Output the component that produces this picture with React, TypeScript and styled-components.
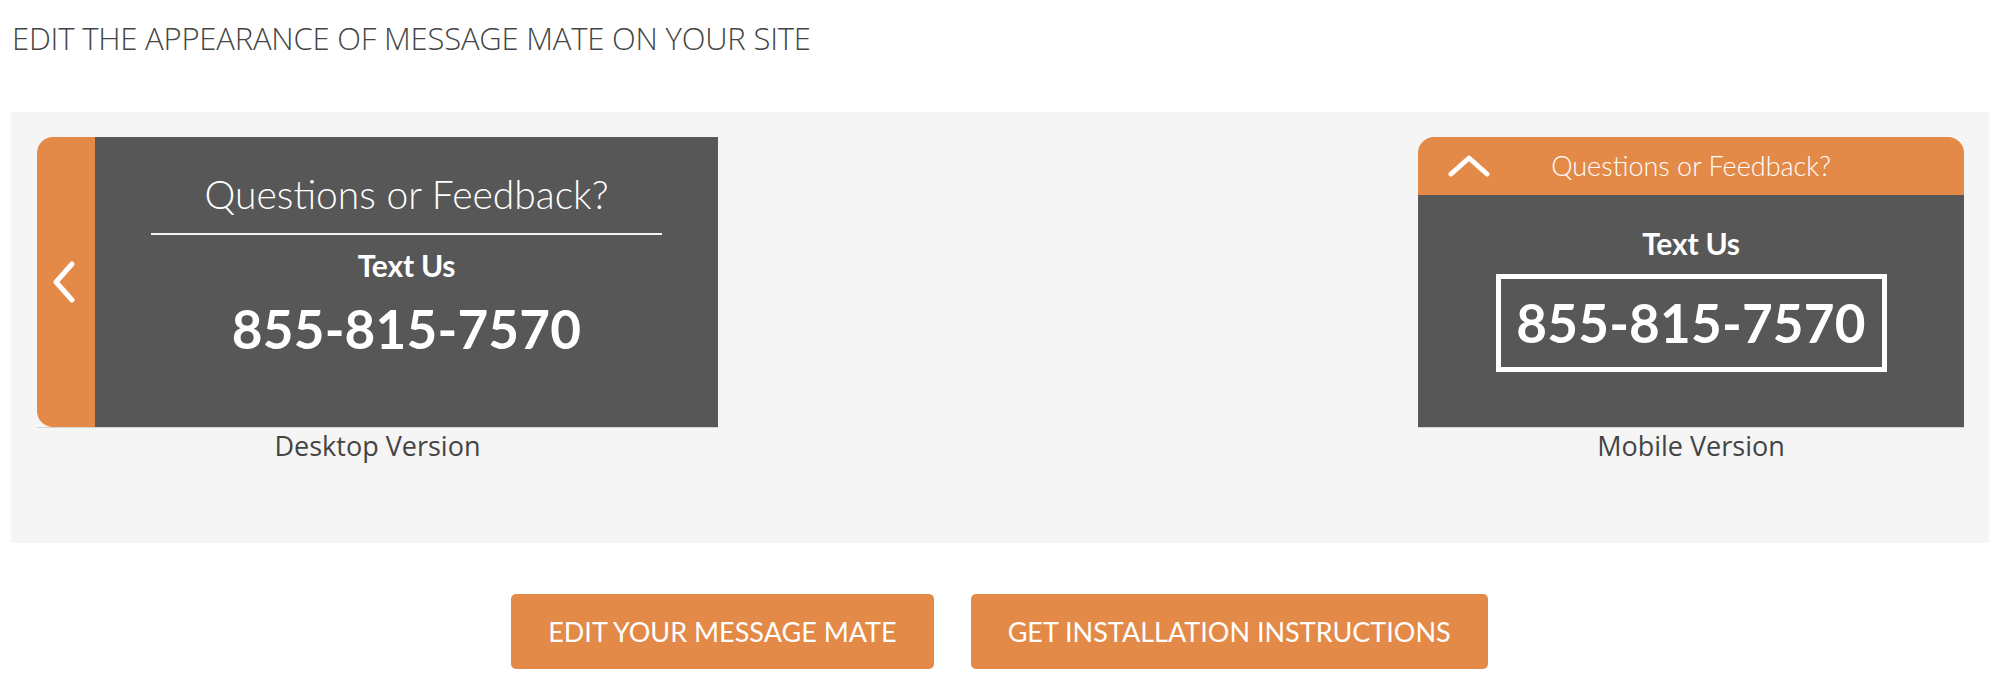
import styled, { createGlobalStyle } from "styled-components";

const GlobalStyle = createGlobalStyle`
  body {
    margin: 0;
    background: #ffffff;
    font-family: "Open Sans", "Liberation Sans", sans-serif;
  }
`;

const ORANGE = "#e48a48";
const DARK = "#575757";

const Page = styled.div`
  padding: 18px 10px 0 11px;
`;

const PageTitle = styled.h1`
  margin: 0 0 54px 1px;
  font-family: "Open Sans", sans-serif;
  font-weight: 300;
  font-size: 31px;
  line-height: 40px;
  color: #454545;
  letter-spacing: -0.2px;
`;

const PreviewPanel = styled.div`
  background: #f5f5f5;
  height: 431px;
  box-sizing: border-box;
  padding: 25px 25px 0 26px;
  display: flex;
  justify-content: space-between;
  align-items: flex-start;
`;

const PreviewColumn = styled.div`
  display: flex;
  flex-direction: column;
  align-items: center;
`;

const PreviewLabel = styled.div`
  margin-top: 2px;
  font-family: "Open Sans", sans-serif;
  font-size: 27px;
  line-height: 34px;
  color: #444444;
`;

const DesktopWidget = styled.div`
  display: flex;
  height: 290px;
  box-shadow: 0 1px 0 #d4d4d4;
`;

const SideTab = styled.div`
  width: 58px;
  background: ${ORANGE};
  border-radius: 16px 0 0 16px;
  display: flex;
  align-items: center;
  justify-content: center;
  padding-right: 4px;
  box-sizing: border-box;
`;

const DesktopBody = styled.div`
  width: 623px;
  background: ${DARK};
  display: flex;
  flex-direction: column;
  align-items: center;
  padding-top: 34px;
  box-sizing: border-box;
`;

const WidgetHeading = styled.div<{ $size: number }>`
  font-family: Lato, "Open Sans", sans-serif;
  font-weight: 300;
  font-size: ${(p) => p.$size}px;
  line-height: ${(p) => Math.round(p.$size * 1.2)}px;
  color: #ffffff;
`;

const Divider = styled.div`
  width: 511px;
  height: 2px;
  background: #f2f2f2;
  margin: 15px 0 14px;
`;

const TextUs = styled.div<{ $gap: number }>`
  font-family: Lato, "Open Sans", sans-serif;
  font-weight: 700;
  font-size: 30px;
  line-height: 32px;
  color: #ffffff;
  letter-spacing: -0.2px;
  margin-bottom: ${(p) => p.$gap}px;
`;

const PhoneNumber = styled.div`
  font-family: Lato, "Open Sans", sans-serif;
  font-weight: 700;
  font-size: 53px;
  line-height: 60px;
  color: #ffffff;
  letter-spacing: 0.2px;
`;

const PhoneBox = styled.div`
  width: 391px;
  height: 98px;
  box-sizing: border-box;
  border: 5px solid #ffffff;
  display: flex;
  align-items: center;
  justify-content: center;
`;

const MobileWidget = styled.div`
  width: 546px;
  height: 290px;
  display: flex;
  flex-direction: column;
  box-shadow: 0 1px 0 #d4d4d4;
`;

const MobileHeader = styled.div`
  height: 58px;
  background: ${ORANGE};
  border-radius: 16px 16px 0 0;
  display: grid;
  grid-template-columns: 1fr auto 1fr;
  align-items: center;
`;

const HeaderIcon = styled.div`
  padding-left: 30px;
  display: flex;
  align-items: center;
`;

const MobileBody = styled.div`
  flex: 1;
  background: ${DARK};
  display: flex;
  flex-direction: column;
  align-items: center;
  padding-top: 32px;
`;

const ButtonRow = styled.div`
  display: flex;
  justify-content: center;
  gap: 37px;
  margin-top: 51px;
  padding-right: 1px;
`;

const ActionButton = styled.button`
  height: 75px;
  padding: 0 37px;
  border: none;
  border-radius: 5px;
  background: ${ORANGE};
  color: #ffffff;
  font-family: Lato, "Open Sans", sans-serif;
  font-weight: 400;
  font-size: 27px;
  cursor: pointer;
`;

const ChevronLeft = () => (
  <svg width="26" height="42" viewBox="0 0 26 42" fill="none">
    <path
      d="M21 3 L5 21 L21 39"
      stroke="#ffffff"
      strokeWidth="5"
      strokeLinecap="round"
      strokeLinejoin="round"
    />
  </svg>
);

const ChevronUp = () => (
  <svg width="42" height="24" viewBox="0 0 42 24" fill="none">
    <path
      d="M3 20 L21 4 L39 20"
      stroke="#ffffff"
      strokeWidth="5"
      strokeLinecap="round"
      strokeLinejoin="round"
    />
  </svg>
);

const App = () => {
  return (
    <>
      <GlobalStyle />
      <Page>
        <PageTitle>EDIT THE APPEARANCE OF MESSAGE MATE ON YOUR SITE</PageTitle>
        <PreviewPanel>
          <PreviewColumn>
            <DesktopWidget>
              <SideTab>
                <ChevronLeft />
              </SideTab>
              <DesktopBody>
                <WidgetHeading $size={39}>Questions or Feedback?</WidgetHeading>
                <Divider />
                <TextUs $gap={18}>Text Us</TextUs>
                <PhoneNumber>855-815-7570</PhoneNumber>
              </DesktopBody>
            </DesktopWidget>
            <PreviewLabel>Desktop Version</PreviewLabel>
          </PreviewColumn>
          <PreviewColumn>
            <MobileWidget>
              <MobileHeader>
                <HeaderIcon>
                  <ChevronUp />
                </HeaderIcon>
                <WidgetHeading $size={27}>Questions or Feedback?</WidgetHeading>
                <div />
              </MobileHeader>
              <MobileBody>
                <TextUs $gap={15}>Text Us</TextUs>
                <PhoneBox>
                  <PhoneNumber>855-815-7570</PhoneNumber>
                </PhoneBox>
              </MobileBody>
            </MobileWidget>
            <PreviewLabel>Mobile Version</PreviewLabel>
          </PreviewColumn>
        </PreviewPanel>
        <ButtonRow>
          <ActionButton>EDIT YOUR MESSAGE MATE</ActionButton>
          <ActionButton>GET INSTALLATION INSTRUCTIONS</ActionButton>
        </ButtonRow>
      </Page>
    </>
  );
};

export default App;
